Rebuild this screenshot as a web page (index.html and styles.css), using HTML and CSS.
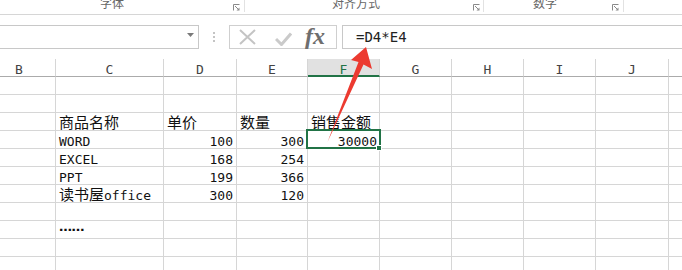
FILE: index.html
```html
<!DOCTYPE html>
<html lang="zh-CN">
<head>
<meta charset="utf-8">
<title>Excel</title>
<link rel="stylesheet" href="styles.css">
</head>
<body>
<div class="ribbon">
  <div class="grp g1"><span class="lbl">字体</span><svg class="launch" width="7" height="7" viewBox="0 0 7 7"><path d="M0.5 6.5V0.5H6.5" fill="none" stroke="#8a8a8a"/><path d="M2 2L5 5" stroke="#8a8a8a"/><path d="M6.5 3.5V6.5H3.5Z" fill="#8a8a8a"/></svg></div>
  <div class="grp g2"><span class="lbl">对齐方式</span><svg class="launch" width="7" height="7" viewBox="0 0 7 7"><path d="M0.5 6.5V0.5H6.5" fill="none" stroke="#8a8a8a"/><path d="M2 2L5 5" stroke="#8a8a8a"/><path d="M6.5 3.5V6.5H3.5Z" fill="#8a8a8a"/></svg></div>
  <div class="grp g3"><span class="lbl">数字</span><svg class="launch" width="7" height="7" viewBox="0 0 7 7"><path d="M0.5 6.5V0.5H6.5" fill="none" stroke="#8a8a8a"/><path d="M2 2L5 5" stroke="#8a8a8a"/><path d="M6.5 3.5V6.5H3.5Z" fill="#8a8a8a"/></svg></div>
</div>

<div class="fbar">
  <div class="namebox"><svg class="dd" width="7" height="4" viewBox="0 0 7 4"><path d="M0 0H7L3.5 4Z" fill="#7a7a7a"/></svg></div>
  <div class="grip"><i></i><i></i><i></i></div>
  <div class="fxbox">
    <svg class="xmark" width="17" height="16" viewBox="0 0 17 16"><path d="M1 1L16 15M16 1L1 15" stroke="#c4c4c4" stroke-width="2"/></svg>
    <svg class="check" width="17" height="14" viewBox="0 0 17 14"><path d="M1 7L6.5 12.5L16 1.5" fill="none" stroke="#cacaca" stroke-width="3"/></svg>
    <span class="fx">fx</span>
  </div>
  <div class="finput">=D4*E4</div>
</div>

<div class="grid">
  <div class="h">B</div><div class="h">C</div><div class="h">D</div><div class="h">E</div><div class="h hs">F</div><div class="h">G</div><div class="h">H</div><div class="h">I</div><div class="h">J</div><div class="h"></div>

  <div class="c"></div><div class="c"></div><div class="c"></div><div class="c"></div><div class="c"></div><div class="c"></div><div class="c"></div><div class="c"></div><div class="c"></div><div class="c"></div>

  <div class="c"></div><div class="c"></div><div class="c"></div><div class="c"></div><div class="c"></div><div class="c"></div><div class="c"></div><div class="c"></div><div class="c"></div><div class="c"></div>

  <div class="c"></div><div class="c"><span class="zh">商品名称</span></div><div class="c"><span class="zh">单价</span></div><div class="c"><span class="zh">数量</span></div><div class="c"><span class="zh">销售金额</span></div><div class="c"></div><div class="c"></div><div class="c"></div><div class="c"></div><div class="c"></div>

  <div class="c"></div><div class="c">WORD</div><div class="c n">100</div><div class="c n">300</div><div class="c n act">30000</div><div class="c"></div><div class="c"></div><div class="c"></div><div class="c"></div><div class="c"></div>

  <div class="c"></div><div class="c">EXCEL</div><div class="c n">168</div><div class="c n">254</div><div class="c"></div><div class="c"></div><div class="c"></div><div class="c"></div><div class="c"></div><div class="c"></div>

  <div class="c"></div><div class="c">PPT</div><div class="c n">199</div><div class="c n">366</div><div class="c"></div><div class="c"></div><div class="c"></div><div class="c"></div><div class="c"></div><div class="c"></div>

  <div class="c"></div><div class="c"><span class="zh">读书屋</span>office</div><div class="c n">300</div><div class="c n">120</div><div class="c"></div><div class="c"></div><div class="c"></div><div class="c"></div><div class="c"></div><div class="c"></div>

  <div class="c"></div><div class="c"></div><div class="c"></div><div class="c"></div><div class="c"></div><div class="c"></div><div class="c"></div><div class="c"></div><div class="c"></div><div class="c"></div>

  <div class="c"></div><div class="c"><span class="dots">……</span></div><div class="c"></div><div class="c"></div><div class="c"></div><div class="c"></div><div class="c"></div><div class="c"></div><div class="c"></div><div class="c"></div>

  <div class="c"></div><div class="c"></div><div class="c"></div><div class="c"></div><div class="c"></div><div class="c"></div><div class="c"></div><div class="c"></div><div class="c"></div><div class="c"></div>

  <div class="c"></div><div class="c"></div><div class="c"></div><div class="c"></div><div class="c"></div><div class="c"></div><div class="c"></div><div class="c"></div><div class="c"></div><div class="c"></div>
</div>

<svg class="arrow" width="682" height="270" viewBox="0 0 682 270">
  <path d="M366 47L372 69L363.5 64.5L327.5 142L358.5 62L351 60Z" fill="#ec3a30"/>
</svg>
</body>
</html>
```

FILE: styles.css
```css
* { box-sizing: border-box; }

html, body {
  margin: 0;
  padding: 0;
}

body {
  width: 682px;
  height: 270px;
  overflow: hidden;
  background: #ffffff;
  position: relative;
  font-family: "DejaVu Sans Mono", "Noto Sans CJK SC", monospace;
  color: #111;
}

/* ribbon group labels */
.ribbon {
  display: flex;
  height: 15px;
  border-bottom: 1px solid #d6d6d6;
  overflow: hidden;
}

.grp {
  display: flex;
  height: 12px;
  border-right: 1px solid #e2e2e2;
}

.g1 { width: 245px; }
.g2 { width: 239px; }
.g3 { width: 140px; }

.lbl {
  font-family: "Noto Sans CJK SC", sans-serif;
  font-size: 12px;
  line-height: 12px;
  color: #666;
  margin-top: -3px;
  white-space: nowrap;
}

.g1 .lbl { margin-left: 100px; }
.g2 .lbl { margin-left: 87px; }
.g3 .lbl { margin-left: 49px; }

.launch {
  margin-left: auto;
  margin-top: 4px;
  margin-right: 4px;
}

.g2 .launch { margin-right: 3px; }

/* formula bar */
.fbar {
  display: flex;
  height: 24px;
  margin-top: 10px;
}

.namebox {
  width: 200px;
  margin-left: -1px;
  border: 1px solid #c8c8c8;
  display: flex;
  justify-content: flex-end;
  padding-right: 4px;
}

.dd { margin-top: 7px; }

.grip {
  width: 30px;
  display: flex;
  flex-direction: column;
  align-items: center;
  padding-top: 7px;
  gap: 2px;
}

.grip i {
  display: block;
  width: 2px;
  height: 2px;
  background: #c4c4c4;
}

.fxbox {
  width: 108px;
  border: 1px solid #cfcfcf;
  display: flex;
  align-items: flex-start;
}

.xmark { margin-left: 9px; margin-top: 3px; }
.check { margin-left: 19px; margin-top: 6px; }

.fx {
  font-family: "Liberation Serif", serif;
  font-style: italic;
  font-weight: bold;
  font-size: 24px;
  line-height: 20px;
  color: #6e6e6e;
  margin-left: 13px;
  margin-top: 0;
}

.finput {
  flex: 1;
  margin-left: 5px;
  margin-right: -2px;
  border: 1px solid #c8c8c8;
  border-right: none;
  padding-left: 13px;
  padding-top: 1px;
  font-size: 14px;
  line-height: 21px;
  color: #222;
}

/* sheet */
.grid {
  display: grid;
  grid-template-columns: 73px 108px 73px 71px 72px 72px 72px 72px 73px 72px;
  grid-auto-rows: 18px;
  margin-top: 10px;
  margin-left: -17px;
  width: 758px;
}

.h, .c {
  border-right: 1px solid #d6d6d6;
  border-bottom: 1px solid #d6d6d6;
  font-size: 13px;
  line-height: 13px;
  padding-top: 4px;
  white-space: nowrap;
  overflow: visible;
}

.h {
  text-align: center;
  color: #444;
  border-bottom-color: #ababab;
}

.h.hs {
  background: #e1e1e1;
  color: #217346;
  border-bottom: 2px solid #217346;
}

.c {
  padding-left: 3px;
  padding-right: 3px;
}

.c.n { text-align: right; }

.zh {
  font-family: "Noto Sans CJK SC", sans-serif;
  font-size: 15px;
  line-height: 0;
}

.dots {
  font-family: "DejaVu Sans", sans-serif;
  font-weight: bold;
  font-size: 13px;
  line-height: 0;
  vertical-align: 5px;
  letter-spacing: -0.5px;
}

.act {
  position: relative;
  z-index: 1;
  padding-right: 2px;
}

.act::before {
  content: "";
  position: absolute;
  top: -2px;
  left: -2px;
  right: -2px;
  bottom: -1px;
  border: 2px solid #217346;
}

.act::after {
  content: "";
  position: absolute;
  right: -3px;
  bottom: -3px;
  width: 4px;
  height: 4px;
  background: #217346;
  border: 1px solid #fff;
  box-sizing: content-box;
}

.arrow {
  position: absolute;
  left: 0;
  top: 0;
  pointer-events: none;
  z-index: 5;
}
```
